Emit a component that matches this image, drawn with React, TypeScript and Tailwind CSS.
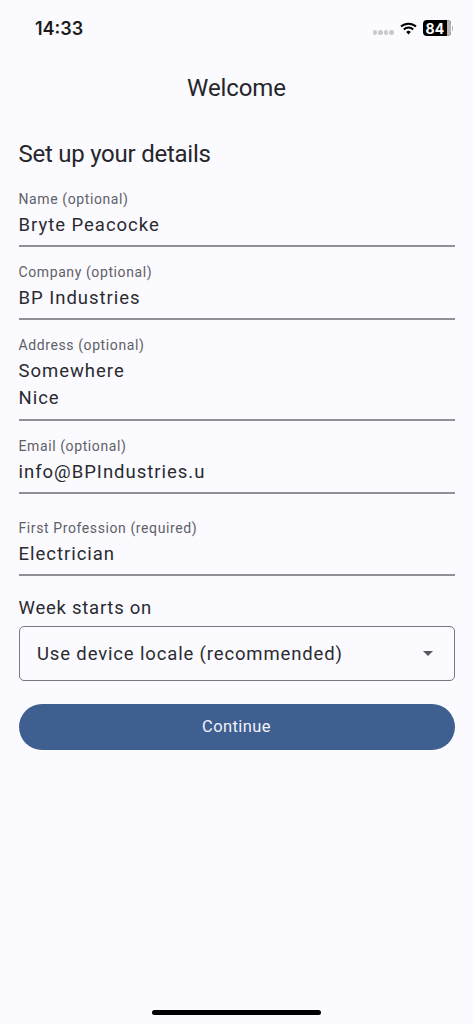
import { ReactNode } from 'react'

function Field({ label, className, children }: { label: string; className?: string; children: ReactNode }) {
  return (
    <div className={`border-b-2 border-[#8f9196] ${className ?? ''}`}>
      <div className="h-[20px] text-[14px] leading-[20px] tracking-[0.6px] text-[#5f6167]">{label}</div>
      <div className="mt-[3px] text-[18.5px] leading-[27px] tracking-[0.98px] text-[#2a2b30]">{children}</div>
      <div className="h-[6px]" />
    </div>
  )
}

function StatusBar() {
  return (
    <div className="flex h-[56px] items-center justify-between pl-[35px] pr-[20px]">
      <span className="font-['Inter',sans-serif] text-[18px] font-semibold text-[#1a1a1c]">14:33</span>
      <div className="flex items-center">
        <div className="mt-[9px] flex gap-[1px]">
          <span className="h-[4.5px] w-[4.5px] rounded-full bg-[#c9c9cc]" />
          <span className="h-[4.5px] w-[4.5px] rounded-full bg-[#c9c9cc]" />
          <span className="h-[4.5px] w-[4.5px] rounded-full bg-[#c9c9cc]" />
          <span className="h-[4.5px] w-[4.5px] rounded-full bg-[#c9c9cc]" />
        </div>
        <svg width="17" height="13" viewBox="0 0 17 13" className="ml-[6px]">
          <path d="M1 4.6 A11 11 0 0 1 16 4.6" fill="none" stroke="#000" strokeWidth="2" />
          <path d="M3.8 7.4 A7 7 0 0 1 13.2 7.4" fill="none" stroke="#000" strokeWidth="2" />
          <path d="M6.2 9.9 A3.4 3.4 0 0 1 10.8 9.9 L8.5 12.4 Z" fill="#000" />
        </svg>
        <div className="relative ml-[6px] flex h-[16px] w-[28px] items-center justify-center overflow-hidden rounded-[4px] bg-[#000]">
          <span className="absolute inset-y-0 right-0 w-[4px] bg-[#b5b5b8]" />
          <span className="relative pr-[3px] font-['Inter',sans-serif] text-[14px] font-bold tracking-[0.2px] text-white">84</span>
        </div>
        <div className="ml-[1px] h-[5px] w-[1.5px] rounded-r-full bg-[#b5b5b8]" />
      </div>
    </div>
  )
}

export default function App() {
  return (
    <div className="flex h-[1024px] w-[473px] flex-col overflow-hidden bg-[#fafaff] font-['Roboto',sans-serif]">
      <StatusBar />
      <div className="mt-[16px] text-center text-[24px] leading-[32px] tracking-[-0.1px] text-[#26262a]">Welcome</div>
      <div className="px-[18.5px]">
        <h1 className="mt-[34px] text-[24px] leading-[32px] tracking-[-0.25px] text-[#26262a]">Set up your details</h1>
        <div className="mt-[19px] flex flex-col">
          <Field label="Name (optional)">Bryte Peacocke</Field>
          <Field label="Company (optional)" className="mt-[15px]">BP Industries</Field>
          <Field label="Address (optional)" className="mt-[15px] pb-[1px]">
            Somewhere
            <br />
            Nice
          </Field>
          <Field label="Email (optional)" className="mt-[15px]">info@BPIndustries.u</Field>
          <Field label="First Profession (required)" className="mt-[24px]">Electrician</Field>
        </div>
        <div className="mt-[19px] text-[18.5px] leading-[26px] tracking-[0.75px] text-[#2a2b30]">Week starts on</div>
        <div className="mt-[4.5px] flex h-[55px] items-center justify-between rounded-[5px] border border-[#77797f] pl-[17.5px] pr-[21px]">
          <span className="pt-[3px] text-[18.5px] tracking-[0.85px] text-[#2a2b30]">Use device locale (recommended)</span>
          <span className="h-0 w-0 border-x-[5px] border-t-[5px] border-x-transparent border-t-[#55575c]" />
        </div>
        <button className="mt-[23px] flex h-[46px] w-full items-center justify-center rounded-full bg-[#3f5f90] pt-[1px] text-[16.5px] tracking-[0.4px] text-[#f0f2fa]">
          Continue
        </button>
      </div>
      <div className="mt-auto mb-[9px] h-[5px] w-[169px] self-center rounded-full bg-[#000]" />
    </div>
  )
}
